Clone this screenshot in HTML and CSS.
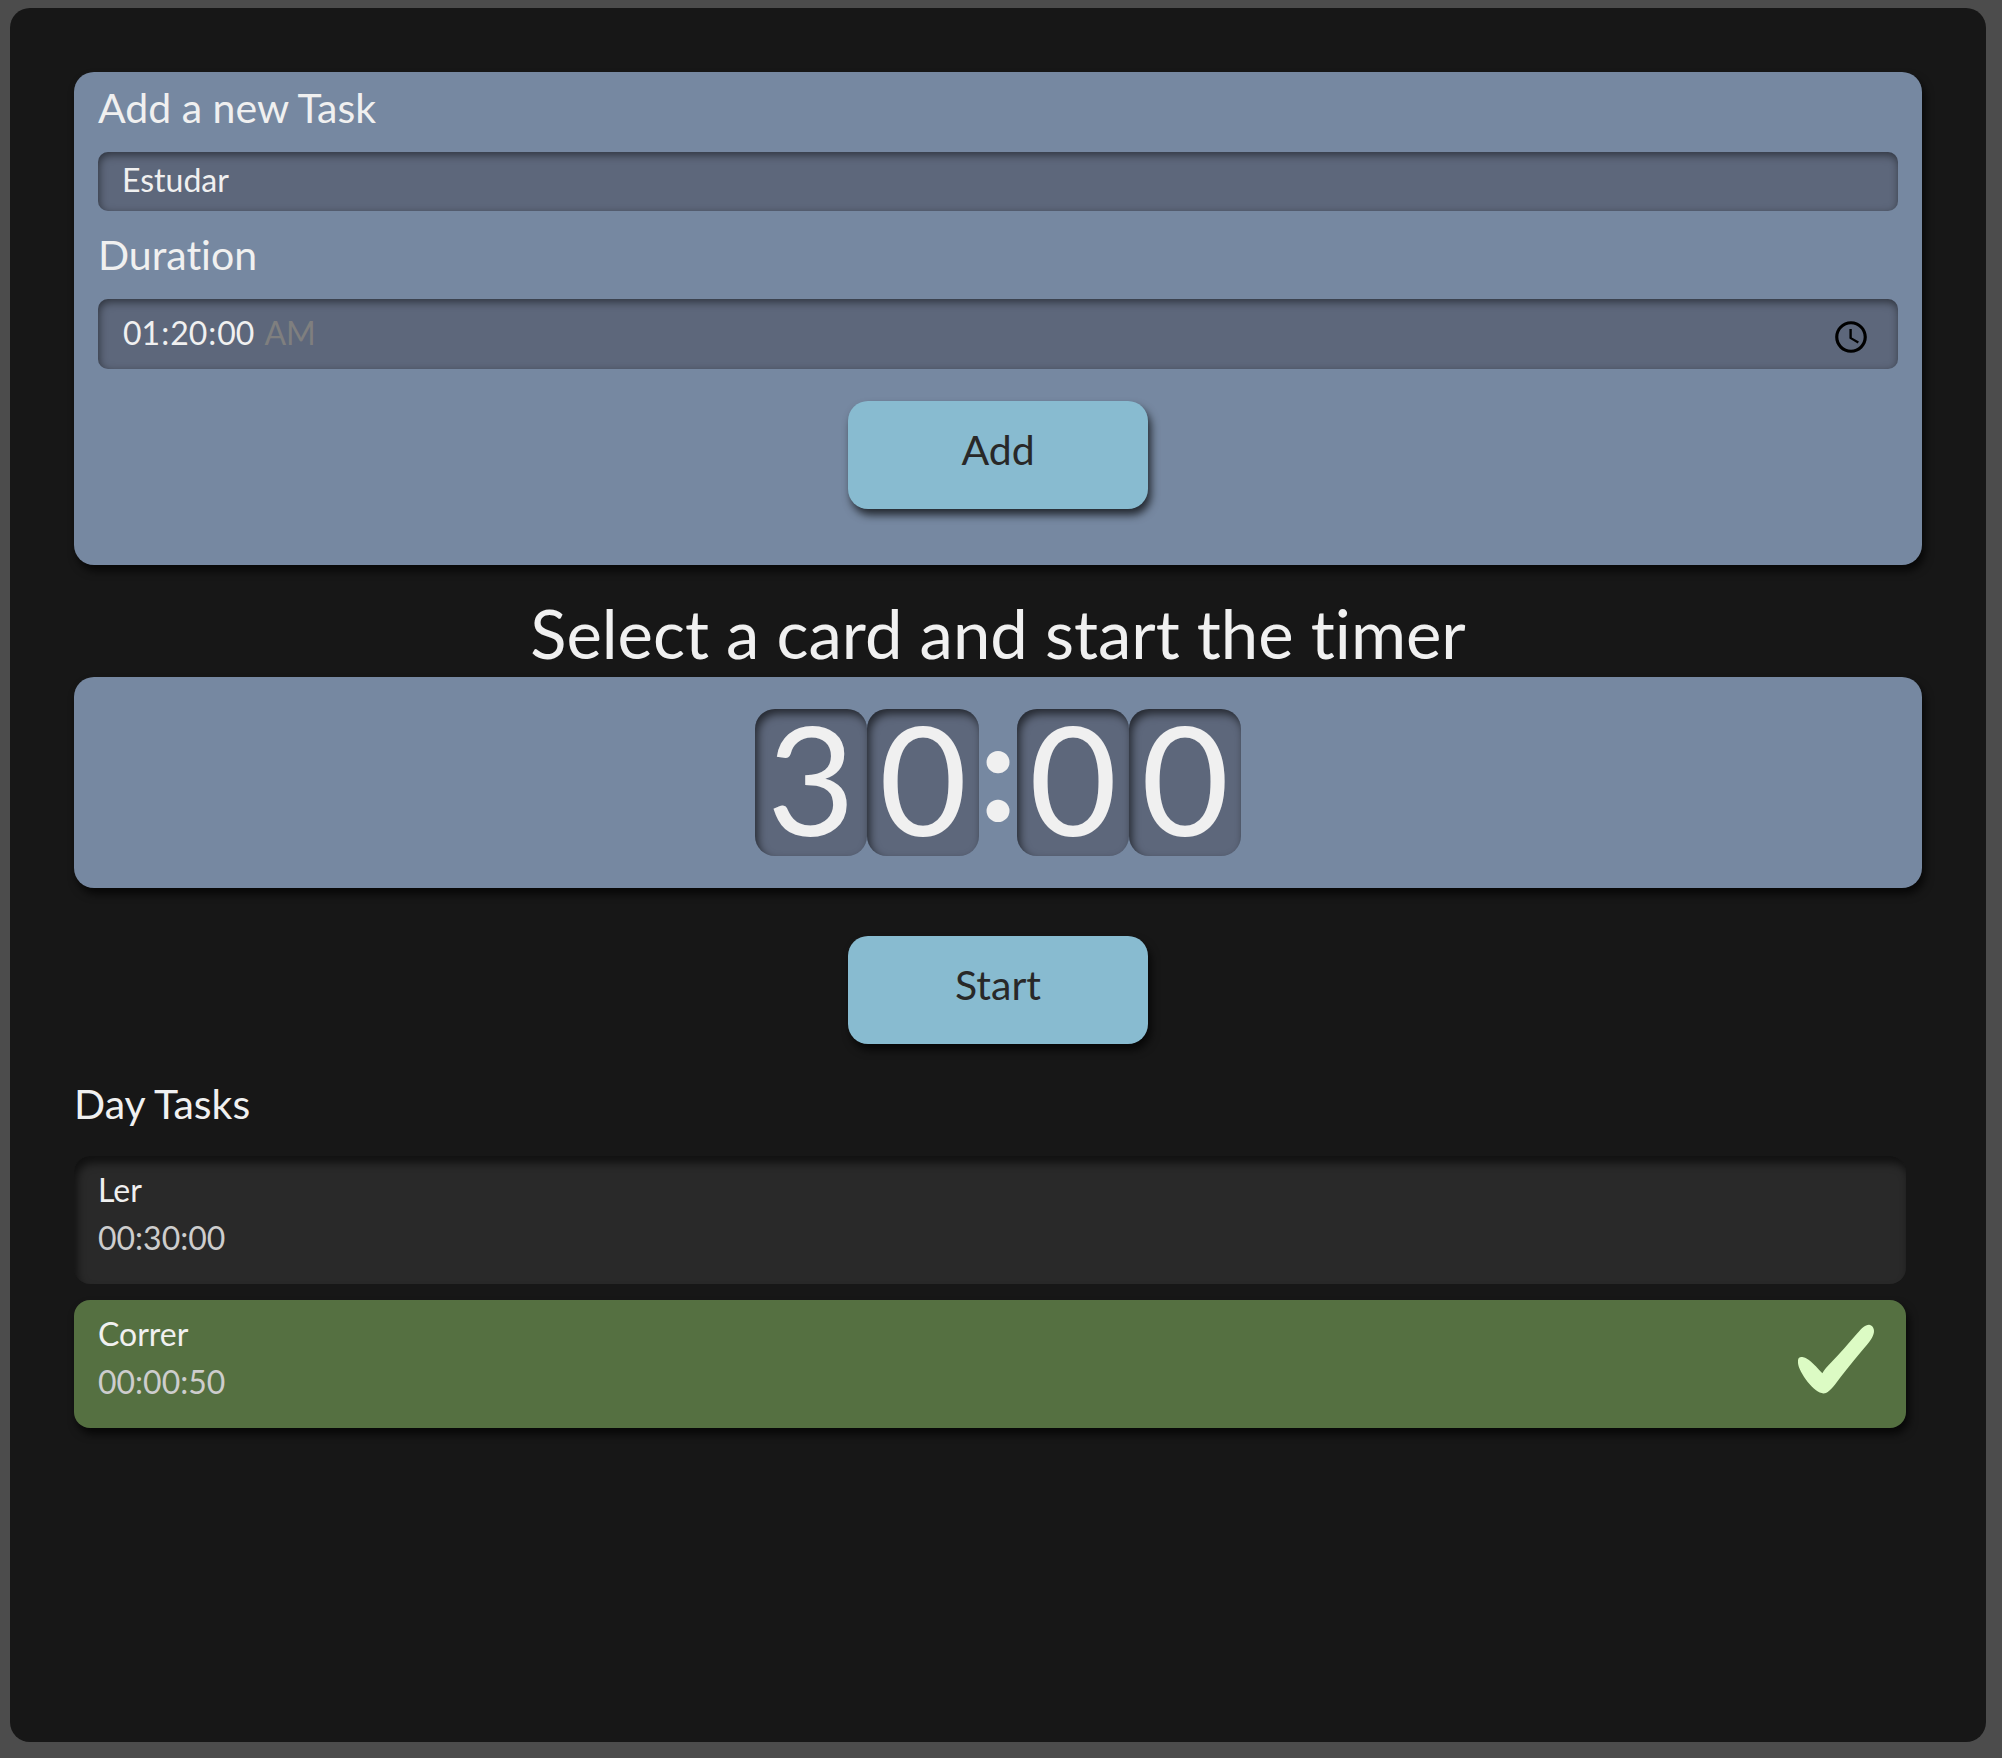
FILE: index.html
```html
<!DOCTYPE html>
<html lang="en">
<head>
<meta charset="utf-8">
<title>Day Tasks</title>
<link rel="stylesheet" href="styles.css">
</head>
<body>
<main class="app">
  <form class="card task-form">
    <label class="label" for="task">Add a new Task</label>
    <input class="field" id="task" type="text" value="Estudar">
    <label class="label" for="duration">Duration</label>
    <input class="field field-time" id="duration" type="time" step="1" value="01:20:00">
    <button class="button" type="button">Add</button>
  </form>
  <section class="timer">
    <h1 class="timer-title">Select a card and start the timer</h1>
    <div class="card clock">
      <span class="digit">3</span>
      <span class="digit">0</span>
      <span class="colon">:</span>
      <span class="digit">0</span>
      <span class="digit">0</span>
    </div>
    <button class="button" type="button">Start</button>
  </section>
  <section class="tasks">
    <h2 class="tasks-title">Day Tasks</h2>
    <ul class="task-list">
      <li class="task task-selected">
        <div>
          <h3 class="task-name">Ler</h3>
          <p class="task-time">00:30:00</p>
        </div>
      </li>
      <li class="task task-done">
        <div>
          <h3 class="task-name">Correr</h3>
          <p class="task-time">00:00:50</p>
        </div>
        <svg class="check" viewBox="0 0 228 208" aria-hidden="true"><path fill="#dcfbc4" d="M0 108C1 98 8 97 16 99C30 102 45 116 73 147C78 137 88 126 100 114C126 88 150 59 178 27C190 13 201 1 213 1C222 2 228 10 228 20C228 33 219 47 207 61C181 91 154 124 128 158C113 178 98 200 84 206C74 209 64 206 54 198C37 184 20 163 9 142C2 130 -1 119 0 108Z"/></svg>
      </li>
    </ul>
  </section>
</main>
</body>
</html>
```
FILE: styles.css
```css
* {
  box-sizing: border-box;
  margin: 0;
}

body {
  min-height: 100vh;
  display: flex;
  padding: 8px 16px 16px 10px;
  background: #4c4c4c;
  color: #f0f0f0;
  font-family: Lato, "Open Sans", sans-serif;
  font-variant-ligatures: none;
}

.app {
  flex: 1;
  padding: 64px;
  border-radius: 20px;
  background: #171717;
}

.card {
  border-radius: 20px;
  background: #7688a1;
  box-shadow: 3px 6px 8px rgba(0, 0, 0, 0.7);
}

.task-form {
  display: flex;
  flex-direction: column;
  padding: 12px 24px 56px;
}

.label {
  margin-bottom: 20px;
  font-size: 41px;
  line-height: 48px;
}

.field {
  width: 100%;
  height: 59px;
  margin-bottom: 20px;
  padding: 0 24px 4px;
  border: 0;
  border-radius: 10px;
  background: #5d677b;
  box-shadow: inset 1px 3px 8px rgba(0, 0, 0, 0.5);
  color: #f0f0f0;
  font: inherit;
  font-size: 32px;
}

.field-time {
  height: 70px;
  margin-bottom: 32px;
}

.field-time::-webkit-datetime-edit-ampm-field {
  color: #7f7f7f;
}

.field-time::-webkit-calendar-picker-indicator {
  margin-top: 10px;
  margin-right: 2px;
  padding: 2px;
  width: 38px;
  height: 38px;
}

.button {
  display: block;
  width: 300px;
  height: 108px;
  margin: 0 auto;
  padding: 0 0 12px;
  border: 0;
  border-radius: 20px;
  background: #88bbd0;
  box-shadow: 3px 6px 8px rgba(0, 0, 0, 0.7);
  color: #282828;
  font: inherit;
  font-size: 41px;
}

.timer-title {
  margin-top: 28px;
  margin-bottom: 4px;
  font-size: 67px;
  font-weight: 400;
  line-height: 80px;
  text-align: center;
}

.clock {
  display: flex;
  justify-content: center;
  margin-bottom: 48px;
  padding: 32px;
  font-size: 152px;
  line-height: 136px;
}

.digit {
  width: 112px;
  height: 147px;
  padding-left: 12px;
  border-radius: 20px;
  background: #5d677b;
  box-shadow: inset 3px 5px 8px rgba(0, 0, 0, 0.6);
}

.colon {
  width: 38px;
  font-size: 140px;
  font-weight: 900;
  line-height: 116px;
  text-align: center;
}

.tasks-title {
  margin: 34px 0 26px;
  font-size: 41px;
  font-weight: 400;
  line-height: 52px;
}

.task-list {
  display: flex;
  flex-direction: column;
  gap: 16px;
  margin-right: 16px;
  padding: 0;
  list-style: none;
}

.task {
  display: flex;
  justify-content: space-between;
  height: 128px;
  padding: 10px 32px 22px 24px;
  border-radius: 16px;
}

.task-selected {
  background: #292929;
  box-shadow: inset 3px 7px 8px rgba(0, 0, 0, 0.6);
}

.task-done {
  background: #557041;
  box-shadow: 3px 6px 8px rgba(0, 0, 0, 0.7);
}

.task-name,
.task-time {
  font-size: 32px;
  font-weight: 400;
  line-height: 48px;
}

.task-time {
  color: #cdcdcd;
}

.check {
  width: 76px;
  height: 70px;
  margin-top: 14px;
}
```
